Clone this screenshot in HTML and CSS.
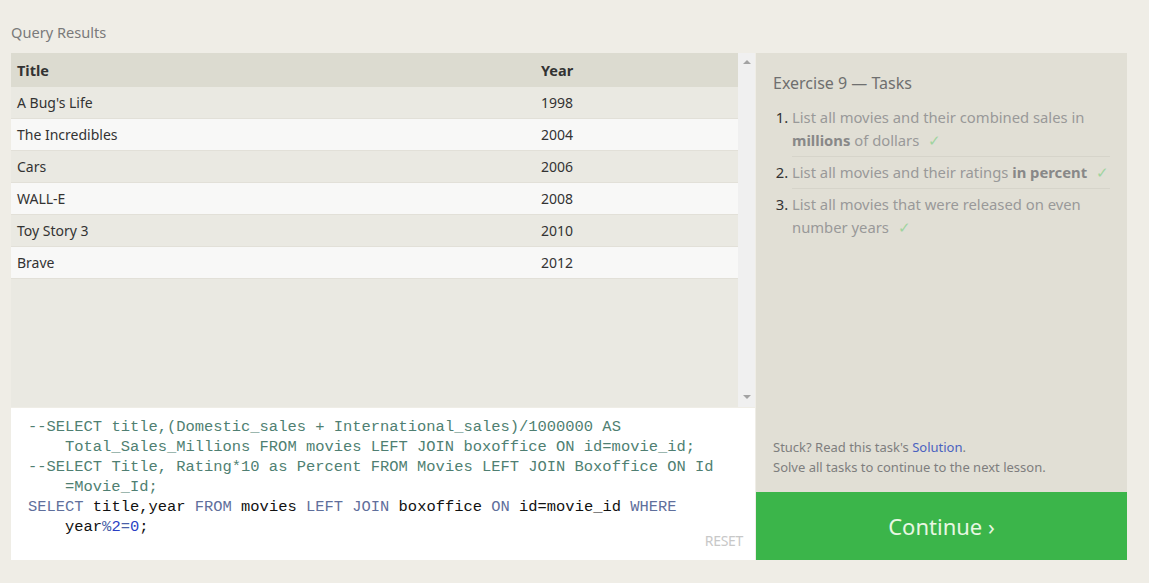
FILE: index.html
```html
<!DOCTYPE html>
<html>
<head>
<meta charset="utf-8">
<link rel="stylesheet" href="styles.css">
</head>
<body>
<div class="page">
  <div class="label">Query Results</div>
  <div class="main">
    <div class="left">
      <div class="results">
        <div class="table-wrap">
          <table class="table">
            <thead>
              <tr><th class="c-title">Title</th><th>Year</th></tr>
            </thead>
            <tbody>
              <tr class="odd"><td>A Bug's Life</td><td>1998</td></tr>
              <tr class="even"><td>The Incredibles</td><td>2004</td></tr>
              <tr class="odd"><td>Cars</td><td>2006</td></tr>
              <tr class="even"><td>WALL-E</td><td>2008</td></tr>
              <tr class="odd"><td>Toy Story 3</td><td>2010</td></tr>
              <tr class="even"><td>Brave</td><td>2012</td></tr>
            </tbody>
          </table>
        </div>
        <div class="scrollbar">
          <span class="arrow up"></span>
          <span class="arrow down"></span>
        </div>
      </div>
      <div class="editor">
        <div class="code">
          <div class="ln cm">--SELECT title,(Domestic_sales + International_sales)/1000000 AS</div>
          <div class="ln cont cm">Total_Sales_Millions FROM movies LEFT JOIN boxoffice ON id=movie_id;</div>
          <div class="ln cm">--SELECT Title, Rating*10 as Percent FROM Movies LEFT JOIN Boxoffice ON Id</div>
          <div class="ln cont cm">=Movie_Id;</div>
          <div class="ln"><span class="kw">SELECT</span> title,year <span class="kw">FROM</span> movies <span class="kw">LEFT JOIN</span> boxoffice <span class="kw">ON</span> id=movie_id <span class="kw">WHERE</span></div>
          <div class="ln cont">year<span class="op">%</span><span class="num">2</span><span class="op">=</span><span class="num">0</span>;</div>
        </div>
        <div class="reset">RESET</div>
      </div>
    </div>
    <div class="right">
      <div class="tasks">
        <h2 class="title">Exercise 9 — Tasks</h2>
        <ol class="list">
          <li><div class="task">List all movies and their combined sales in <b>millions</b> of dollars <span class="check">✓</span></div></li>
          <li><div class="task">List all movies and their ratings <b>in percent</b> <span class="check">✓</span></div></li>
          <li><div class="task">List all movies that were released on even number years <span class="check">✓</span></div></li>
        </ol>
        <div class="help">
          <div>Stuck? Read this task's <span class="link">Solution</span>.</div>
          <div>Solve all tasks to continue to the next lesson.</div>
        </div>
      </div>
      <div class="continue">Continue ›</div>
    </div>
  </div>
</div>
</body>
</html>
```

FILE: styles.css
```css
html, body {
  margin: 0;
  padding: 0;
  background: #efede6;
  font-family: "Noto Sans", "Open Sans", sans-serif;
}
.page {
  padding: 22px 22px 0 11px;
}
.label {
  font-size: 14.6px;
  color: #7a7a7a;
  line-height: 20px;
  height: 31px;
}
.main {
  display: flex;
  gap: 1px;
}
.left {
  width: 744px;
  display: flex;
  flex-direction: column;
  gap: 1px;
}
.results {
  height: 354px;
  display: flex;
  background: #eae9e2;
}
.table-wrap {
  flex: 1;
}
.table {
  width: 100%;
  border-collapse: collapse;
  font-size: 14px;
  color: #333;
}
.table th {
  text-align: left;
  height: 34px;
  padding: 0 0 0 6px;
  background: #dcdbd0;
  font-weight: bold;
  font-size: 14.5px;
}
.table th.c-title {
  width: 518px;
}
.table td {
  height: 31px;
  padding: 0 0 0 6px;
  border-bottom: 1px solid #e2e0d8;
}
.table tr.odd td { background: #eae9e2; }
.table tr.even td { background: #f8f8f7; }
.scrollbar {
  width: 17px;
  background: #f0f0f0;
  position: relative;
}
.arrow {
  position: absolute;
  left: 5px;
  width: 0;
  height: 0;
  border-left: 4px solid transparent;
  border-right: 4px solid transparent;
}
.arrow.up { top: 7px; border-bottom: 4px solid #a3a3a3; }
.arrow.down { bottom: 8px; border-top: 4px solid #a3a3a3; }
.editor {
  height: 152px;
  background: #fff;
  position: relative;
  box-sizing: border-box;
  padding: 9px 0 0 17px;
}
.code {
  font-family: "Liberation Mono", "DejaVu Sans Mono", monospace;
  font-size: 15.45px;
  line-height: 20px;
  color: #111;
}
.ln { white-space: pre; }
.ln.cont { padding-left: 4ch; }
.cm { color: #4f7f72; }
.kw { color: #5f6f9c; }
.op { color: #4b5fa8; }
.num { color: #2a3fc4; }
.reset {
  position: absolute;
  right: 12px;
  bottom: 10px;
  font-size: 14px;
  color: #c8c8c8;
  letter-spacing: -0.3px;
}
.right {
  width: 371px;
  display: flex;
  flex-direction: column;
}
.tasks {
  height: 439px;
  background: #e1dfd5;
  box-sizing: border-box;
  padding: 18px 17px 15px 17px;
  display: flex;
  flex-direction: column;
}
.title {
  margin: 0;
  font-weight: normal;
  font-size: 16px;
  line-height: 24px;
  color: #6f6f6f;
}
.list {
  margin: 7px 0 0 0;
  padding: 0 0 0 19px;
  color: #333;
  font-size: 14.8px;
}
.list li {
  line-height: 23px;
}
.list li::marker { color: #333; }
.task {
  color: #999;
  padding: 4px 0 4px 0;
  border-bottom: 1px solid #d6d4ca;
}
.list li:last-child .task { border-bottom: none; }
.task b { color: #888; font-weight: bold; }
.check {
  color: #9fd49f;
  margin-left: 5px;
}
.help {
  margin-top: auto;
  font-size: 13px;
  line-height: 20px;
  color: #7e7e7e;
}
.link { color: #4a62c0; }
.continue {
  height: 68px;
  background: #3bb54a;
  color: #e8f7e2;
  font-size: 22px;
  display: flex;
  align-items: center;
  justify-content: center;
}
```
